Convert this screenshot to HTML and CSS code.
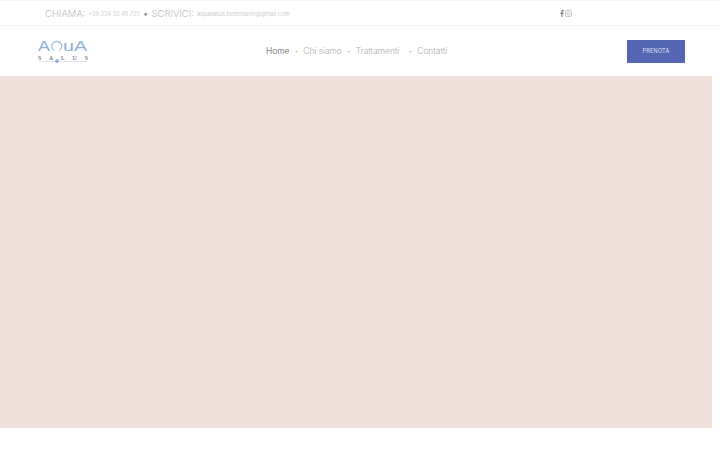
FILE: index.html
```html
<!DOCTYPE html>
<html lang="it">
<head>
    <meta charset="UTF-8">
    <meta name="viewport" content="width=device-width, initial-scale=1.0">
    <title>Aqua Salus</title>
    <link rel="stylesheet" href="styles.css">
</head>
<body>
    <div class="topbar">
        <div class="contacts">
            <span class="contact-label">CHIAMA:</span>
            <span class="contact-value">+39 334 33 48 725</span>
            <span class="contact-dot">•</span>
            <span class="contact-label">SCRIVICI:</span>
            <span class="contact-value email">aquasalus.benessere@gmail.com</span>
        </div>
        <div class="social">
            <svg class="social-icon" width="4" height="7" viewBox="0 0 4 8"><path d="M1.2 8V4.3H0V3h1.2V1.9C1.2.7 1.9 0 3 0h1v1.3h-.7c-.6 0-.8.3-.8.8V3H4l-.2 1.3H2.5V8z" fill="#777"/></svg>
            <svg class="social-icon" width="7" height="7" viewBox="0 0 8 8" fill="none" stroke="#aaa" stroke-width=".8"><rect x=".5" y=".5" width="7" height="7" rx="2"/><circle cx="4" cy="4" r="1.7"/></svg>
        </div>
    </div>

    <header class="header">
        <a class="logo" href="#">
            <svg width="52" height="26" viewBox="0 0 52 26">
                <text x="1" y="13" class="logo-aqua" textLength="12" lengthAdjust="spacingAndGlyphs">A</text>
                <path d="M17 12.5a5 5 0 1 1 5.5 0" fill="none" stroke="#9dbce0" stroke-width="1.2"/>
                <text x="26" y="13" class="logo-aqua" textLength="24" lengthAdjust="spacingAndGlyphs">uA</text>
                <text x="1" y="21.5" class="logo-salus" textLength="50">S A L U S</text>
                <path d="M2 23.5h48" stroke="#d5dde8" stroke-width=".8"/>
                <circle cx="20" cy="23" r="2" fill="#8fb3de"/>
            </svg>
        </a>
        <nav class="nav">
            <a class="nav-link active" href="#">Home</a>
            <span class="nav-sep">•</span>
            <a class="nav-link" href="#">Chi siamo</a>
            <span class="nav-sep">•</span>
            <a class="nav-link wide" href="#">Trattamenti</a>
            <span class="nav-sep">•</span>
            <a class="nav-link" href="#">Contatti</a>
        </nav>
        <a class="book-btn" href="#">PRENOTA</a>
    </header>

    <div class="hero"></div>
</body>
</html>
```

FILE: styles.css
```css
* {
    box-sizing: border-box;
}

body {
    margin: 0;
    height: 450px;
    overflow: hidden;
    background: #fff;
    font-family: Inter, "Open Sans", sans-serif;
    font-weight: 300;
}

a {
    text-decoration: none;
}

.topbar {
    display: flex;
    align-items: center;
    height: 26px;
    padding-left: 45px;
    border-top: 1px solid #f6f6f6;
    border-bottom: 1px solid #f6f6f6;
}

.contacts {
    display: flex;
    align-items: center;
    gap: 3px;
    width: 515px;
    color: #bbb;
    white-space: nowrap;
}

.contact-label {
    font-size: 9.5px;
}

.contact-value {
    font-size: 5.7px;
}

.contact-value.email {
    font-size: 5.95px;
}

.contact-dot {
    font-size: 10px;
    color: #888;
}

.social {
    display: flex;
    align-items: center;
    gap: 1px;
}

.header {
    display: flex;
    align-items: center;
    height: 50px;
    width: 712px;
    padding: 0 27px 0 37px;
}

.logo {
    display: flex;
    width: 229px;
}

.logo-aqua {
    font-family: "Liberation Sans", sans-serif;
    font-size: 15px;
    fill: #8fb0d8;
}

.logo-salus {
    font-family: "Liberation Serif", serif;
    font-size: 5.8px;
    fill: #3c4658;
}

.nav {
    display: flex;
    align-items: center;
    gap: 5.6px;
    flex: 1;
    font-size: 8.4px;
}

.nav-link {
    color: #aaa;
}

.nav-link.active {
    color: #555;
}

.nav-link.wide {
    margin-right: 4px;
}

.nav-sep {
    font-size: 5px;
    color: #999;
}

.book-btn {
    display: flex;
    align-items: center;
    justify-content: center;
    width: 58px;
    height: 23px;
    background: #5566b2;
    color: #dfe3f2;
    font-size: 5.5px;
    font-weight: 400;
    letter-spacing: 0.2px;
}

.hero {
    width: 712px;
    height: 352px;
    background: #efe0dc;
}
```
